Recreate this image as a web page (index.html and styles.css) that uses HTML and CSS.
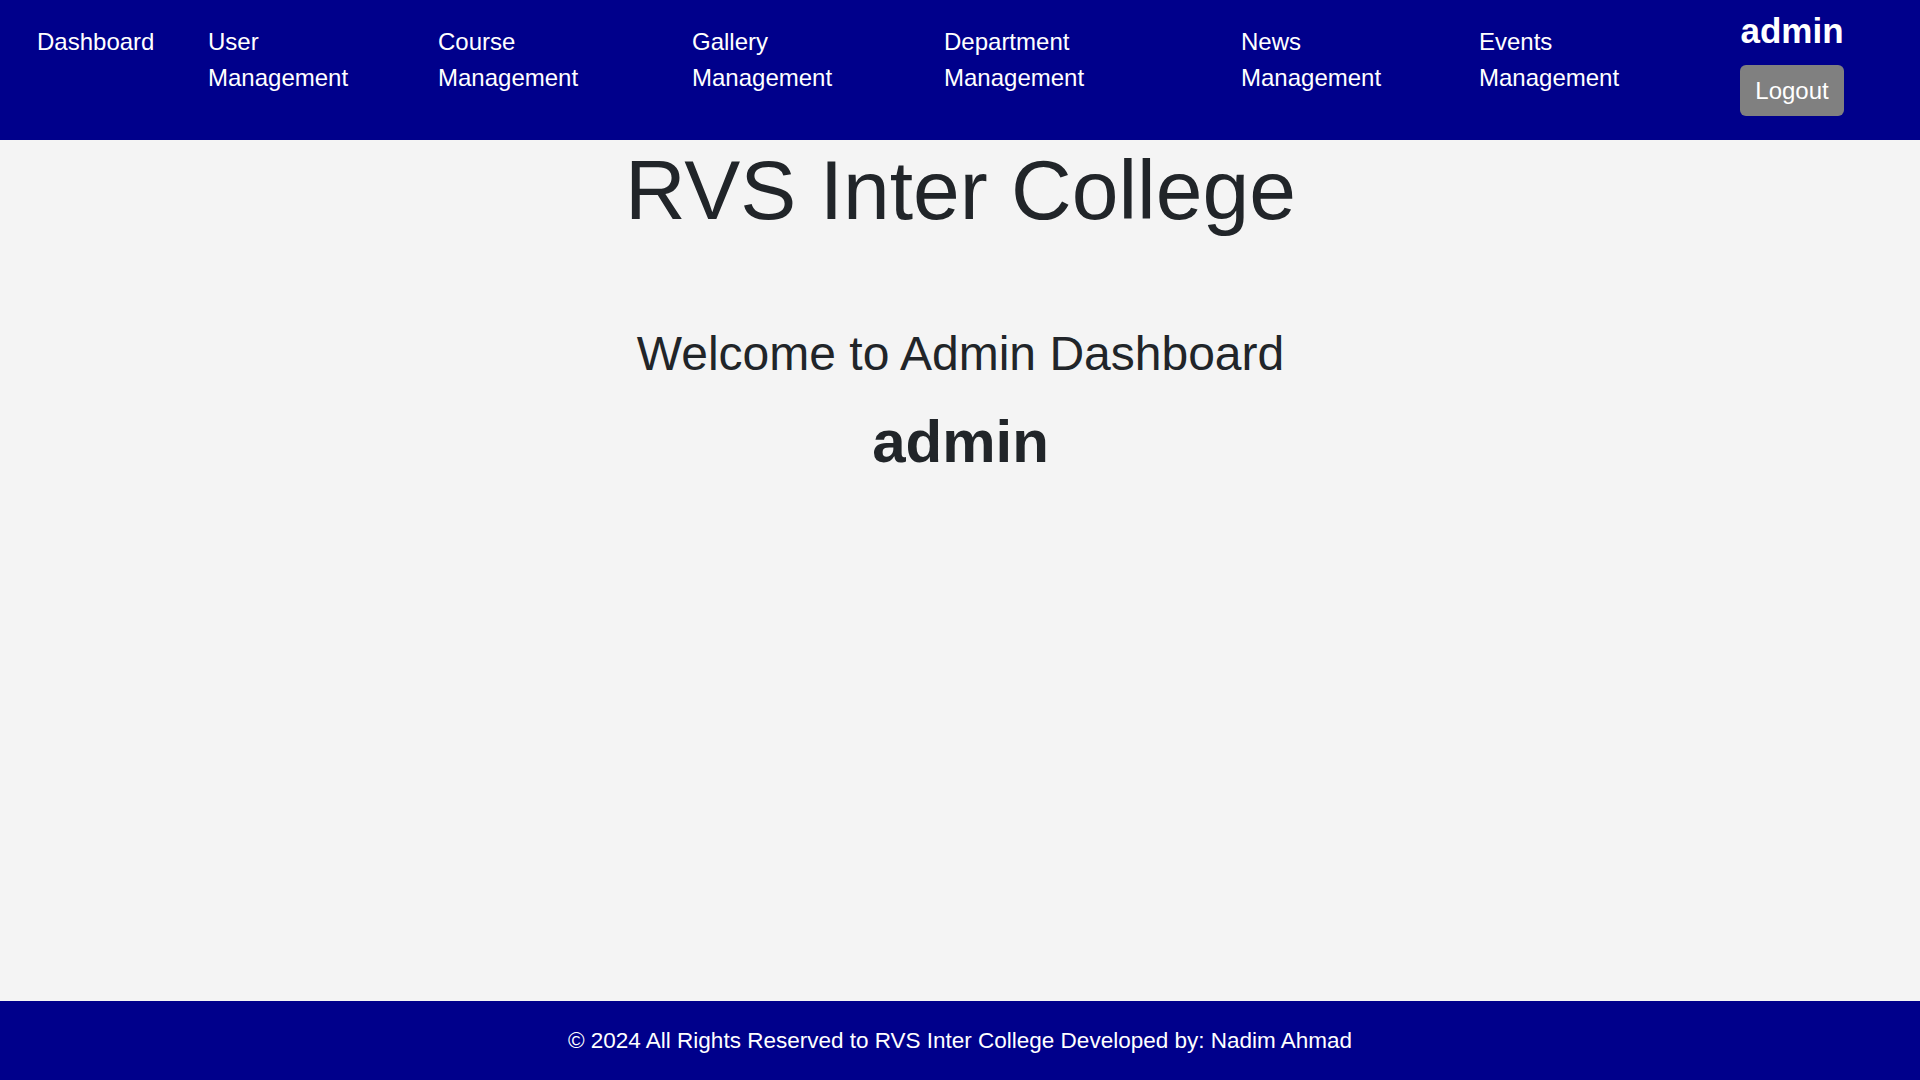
FILE: index.html
```html
<!DOCTYPE html>
<html lang="en">
<head>
<meta charset="utf-8">
<title>Admin Dashboard - RVS Inter College</title>
<link rel="stylesheet" href="styles.css">
</head>
<body>
<div class="page">
  <nav class="navbar">
    <ul class="nav-list">
      <li class="nav-item"><a class="nav-link" href="#">Dashboard</a></li>
      <li class="nav-item"><a class="nav-link" href="#">User Management</a></li>
      <li class="nav-item"><a class="nav-link" href="#">Course Management</a></li>
      <li class="nav-item"><a class="nav-link" href="#">Gallery Management</a></li>
      <li class="nav-item"><a class="nav-link" href="#">Department Management</a></li>
      <li class="nav-item"><a class="nav-link" href="#">News Management</a></li>
      <li class="nav-item"><a class="nav-link" href="#">Events Management</a></li>
      <li class="nav-user">
        <span class="nav-username">admin</span>
        <button class="logout-btn" type="button">Logout</button>
      </li>
    </ul>
  </nav>
  <main class="content">
    <h1 class="site-title">RVS Inter College</h1>
    <h2 class="welcome">Welcome to Admin Dashboard</h2>
    <h3 class="user-name">admin</h3>
  </main>
  <footer class="footer">
    <p class="footer-text">© 2024 All Rights Reserved to RVS Inter College Developed by: Nadim Ahmad</p>
  </footer>
</div>
</body>
</html>
```
FILE: styles.css
```css
* {
  box-sizing: border-box;
}

html, body {
  margin: 0;
  padding: 0;
}

body {
  font-family: "Liberation Sans", Arial, sans-serif;
  background: #f4f4f4;
  color: #212529;
}

.page {
  min-height: 100vh;
  display: flex;
  flex-direction: column;
}

.navbar {
  background: #00008b;
  height: 140px;
}

.nav-list {
  list-style: none;
  margin: 0;
  padding: 0 0 0 37px;
  display: grid;
  grid-template-columns: 171px 230px 254px 252px 297px 238px 261px 104px;
  align-items: start;
}

.nav-item {
  padding-top: 24px;
}

.nav-link {
  display: block;
  width: min-content;
  color: #ffffff;
  text-decoration: none;
  font-size: 24px;
  line-height: 36px;
}

.nav-user {
  display: flex;
  flex-direction: column;
  align-items: center;
  padding-top: 10px;
}

.nav-username {
  color: #ffffff;
  font-weight: bold;
  font-size: 35px;
  line-height: 42px;
}

.logout-btn {
  margin-top: 13px;
  background: #808080;
  color: #ffffff;
  border: none;
  border-radius: 6px;
  font-family: inherit;
  font-size: 24px;
  line-height: 36px;
  padding: 7.5px 15px;
  cursor: pointer;
}

.content {
  flex: 1;
  text-align: center;
  padding-left: 1px;
}

.site-title {
  margin: 0 0 84px;
  font-size: 84px;
  font-weight: normal;
  line-height: 1.2;
}

.welcome {
  margin: 0 0 24px;
  font-size: 48px;
  font-weight: normal;
  line-height: 1.2;
}

.user-name {
  margin: 0;
  font-size: 60px;
  font-weight: bold;
  line-height: 1.2;
}

.footer {
  background: #00008b;
  height: 79px;
  display: flex;
  align-items: center;
  justify-content: center;
}

.footer-text {
  margin: 0;
  color: #ffffff;
  font-size: 22.5px;
  line-height: 1.2;
}
```
